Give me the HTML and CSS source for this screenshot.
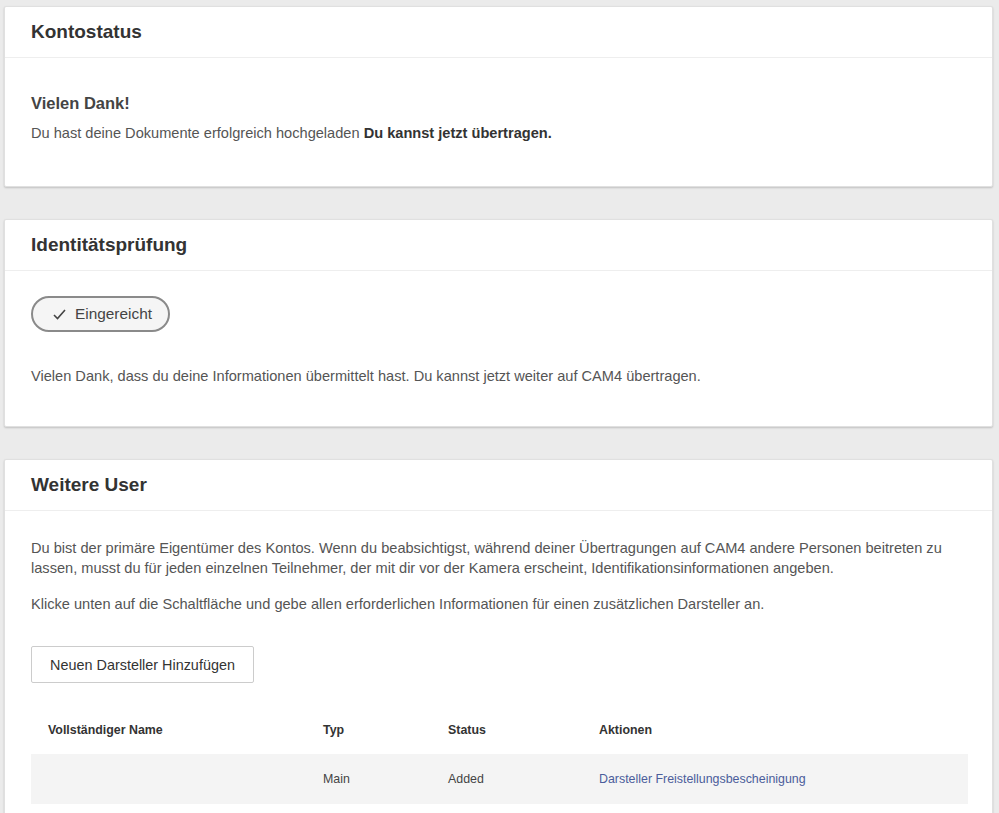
FILE: index.html
```html
<!DOCTYPE html>
<html lang="de">
<head>
<meta charset="utf-8">
<title>Konto</title>
<link rel="stylesheet" href="styles.css">
</head>
<body>
<main class="page">
  <section class="card">
    <header class="card-head"><h2>Kontostatus</h2></header>
    <div class="card-body status-body">
      <h3>Vielen Dank!</h3>
      <p>Du hast deine Dokumente erfolgreich hochgeladen <strong>Du kannst jetzt übertragen.</strong></p>
    </div>
  </section>

  <section class="card">
    <header class="card-head"><h2>Identitätsprüfung</h2></header>
    <div class="card-body id-body">
      <div class="pill">
        <svg width="13" height="11" viewBox="0 0 13 11"><polyline points="1,6 4.5,9.5 12,1" fill="none" stroke="#444" stroke-width="1.6"/></svg>
        <span>Eingereicht</span>
      </div>
      <p>Vielen Dank, dass du deine Informationen übermittelt hast. Du kannst jetzt weiter auf CAM4 übertragen.</p>
    </div>
  </section>

  <section class="card">
    <header class="card-head"><h2>Weitere User</h2></header>
    <div class="card-body users-body">
      <p class="intro">Du bist der primäre Eigentümer des Kontos. Wenn du beabsichtigst, während deiner Übertragungen auf CAM4 andere Personen beitreten zu lassen, musst du für jeden einzelnen Teilnehmer, der mit dir vor der Kamera erscheint, Identifikationsinformationen angeben.</p>
      <p class="p2">Klicke unten auf die Schaltfläche und gebe allen erforderlichen Informationen für einen zusätzlichen Darsteller an.</p>
      <button class="btn">Neuen Darsteller Hinzufügen</button>
      <div class="table">
        <div class="row head">
          <div>Vollständiger Name</div><div>Typ</div><div>Status</div><div>Aktionen</div>
        </div>
        <div class="row data">
          <div></div><div>Main</div><div>Added</div><div><a href="#">Darsteller Freistellungsbescheinigung</a></div>
        </div>
      </div>
    </div>
  </section>
</main>
</body>
</html>
```

FILE: styles.css
```css
html, body {
  margin: 0;
  padding: 0;
  background: #ebebeb;
}
body {
  font-family: Arial, "Liberation Sans", Helvetica, sans-serif;
  color: #555;
}
.page {
  padding: 6px 6px 0 4px;
  display: flex;
  flex-direction: column;
  gap: 32px;
}
.card {
  background: #fff;
  border: 1px solid #e0e0e0;
  border-radius: 2px;
  box-shadow: 0 1px 2px rgba(0,0,0,0.18);
}
.card-head {
  height: 50px;
  display: flex;
  align-items: center;
  padding-left: 26px;
  border-bottom: 1px solid #eeeeee;
}
.card-head h2 {
  margin: 0;
  font-size: 19px;
  font-weight: bold;
  color: #333;
}
.card-body {
  padding-left: 26px;
  padding-right: 26px;
}
.card-body p {
  margin: 0;
  font-size: 14.6px;
  line-height: 20px;
  color: #555;
}
.card-body strong {
  color: #333;
}
.status-body {
  padding-top: 34px;
  padding-bottom: 43px;
}
.status-body h3 {
  margin: 0 0 9px;
  font-size: 16.5px;
  line-height: 22px;
  color: #444;
}
.id-body {
  padding-top: 25px;
  padding-bottom: 40px;
}
.pill {
  display: inline-flex;
  align-items: center;
  gap: 9px;
  height: 32px;
  padding: 0 16px 0 20px;
  border: 2px solid #8a8a8a;
  border-radius: 18px;
  background: #f5f5f5;
  font-size: 15.4px;
  color: #444;
  margin-bottom: 34px;
}
.users-body {
  padding-top: 27px;
  padding-right: 24px;
  padding-bottom: 40px;
}
.users-body .intro {
  max-width: 920px;
}
.users-body .p2 {
  margin-top: 16px;
}
.btn {
  display: block;
  margin-top: 32px;
  height: 37px;
  width: 223px;
  background: #fff;
  border: 1px solid #cccccc;
  border-radius: 2px;
  font-family: inherit;
  font-size: 14.4px;
  color: #333;
  padding: 0;
}
.table {
  margin-top: 23px;
}
.row {
  display: grid;
  grid-template-columns: 275px 125px 151px 1fr;
  align-items: center;
  font-size: 12.4px;
}
.row > div {
  padding-left: 17px;
}
.row.head {
  height: 48px;
  font-weight: bold;
  color: #333;
}
.row.data {
  height: 50px;
  background: #f4f4f4;
  color: #444;
}
.row a {
  color: #4b5d9b;
  text-decoration: none;
}
```
